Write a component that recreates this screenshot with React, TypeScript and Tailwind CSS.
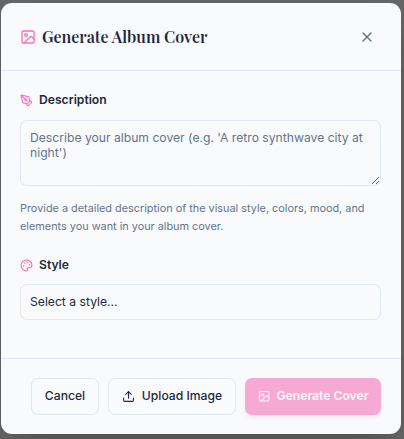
import { Image, Palette, PenTool, Upload, X } from 'lucide-react';

export default function App() {
  return (
    <div className="h-[439px] w-[404px] overflow-hidden bg-[#666666] pt-[3px] pl-px font-['Inter','Liberation_Sans',sans-serif] text-[#1e293b]">
      <div className="flex h-[431px] w-[400px] flex-col rounded-[11px] bg-[#f9fafc] shadow-[0_18px_36px_-9px_rgba(0,0,0,0.25)]">
        <header className="flex h-[68px] shrink-0 items-center justify-between border-b border-[#dfe7f1] pr-[26px] pl-[19px]">
          <h2 className="flex items-center gap-[6px] font-['Playfair_Display','Liberation_Serif',serif] text-[16px] leading-[24px] font-semibold whitespace-nowrap">
            <Image size={16} strokeWidth={2} className="text-[#f472b6]" />
            <span>Generate Album Cover</span>
          </h2>
          <button aria-label="Close" className="text-[#64748b]">
            <X size={16} strokeWidth={2} />
          </button>
        </header>
        <main className="flex grow flex-col pr-[20px] pl-[19px] pt-[20px]">
          <label className="flex h-[18px] items-center gap-[6px] text-[12.15px] font-semibold">
            <PenTool size={13} className="text-[#f472b6]" />
            Description
          </label>
          <textarea
            className="mt-[11px] h-[66px] w-[361px] shrink-0 rounded-[7px] border border-[#dfe7f1] bg-transparent px-[9px] py-[9px] text-[12.17px] leading-[15px] placeholder:text-[#64748b]"
            placeholder="Describe your album cover (e.g. 'A retro synthwave city at night')"
          />
          <p className="mt-[13px] text-[10.87px] leading-[18px] text-[#64748b]">
            Provide a detailed description of the visual style, colors, mood, and elements you want in your album cover.
          </p>
          <label className="mt-[21px] flex h-[18px] items-center gap-[6px] text-[12.15px] font-semibold">
            <Palette size={13} className="text-[#f472b6]" />
            Style
          </label>
          <div className="mt-[10px] flex h-[36px] items-center rounded-[7px] border border-[#dfe7f1] px-[9px] text-[12.17px]">
            Select a style...
          </div>
        </main>
        <footer className="flex h-[76px] shrink-0 items-start justify-end gap-[9px] border-t border-[#dfe7f1] pt-[19px] pr-[20px] text-[12.15px] font-medium whitespace-nowrap">
          <button className="h-[37px] w-[68px] rounded-[7px] border border-[#dfe7f1]">Cancel</button>
          <button className="flex h-[37px] w-[128px] items-center justify-center gap-[7px] rounded-[7px] border border-[#dfe7f1]">
            <Upload size={13} />
            Upload Image
          </button>
          <button className="flex h-[37px] w-[136px] items-center justify-center gap-[6.5px] rounded-[7px] bg-[#f6a9d2] font-semibold text-[#fdf6fa] shadow-[0_3px_5px_-1px_rgba(0,0,0,0.08)]">
            <Image size={12.5} />
            Generate Cover
          </button>
        </footer>
      </div>
    </div>
  );
}
